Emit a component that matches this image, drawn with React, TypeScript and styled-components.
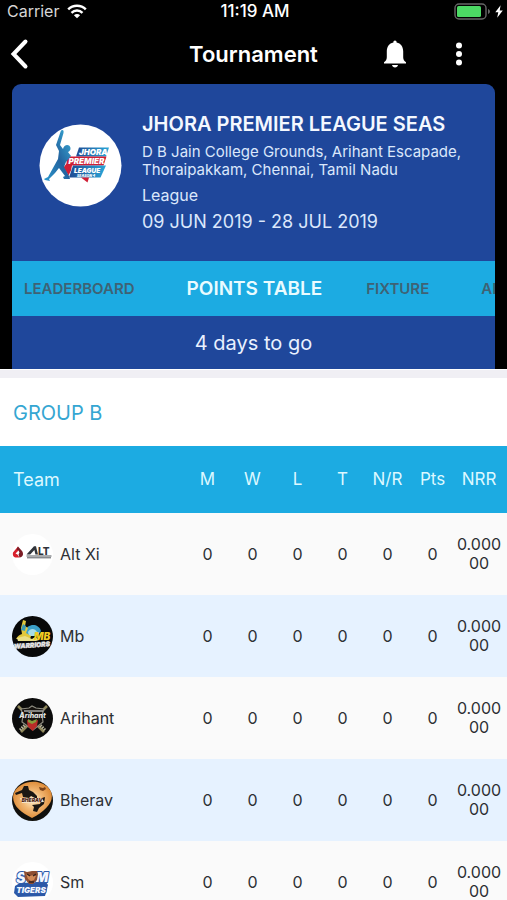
import React from "react";
import styled, { createGlobalStyle } from "styled-components";

const GlobalStyle = createGlobalStyle`
  * { box-sizing: border-box; }
  body { margin: 0; background: #fff; font-family: Inter, "Liberation Sans", sans-serif; }
  button { font: inherit; border: 0; padding: 0; background: none; cursor: pointer; }
  h1, h2, p { margin: 0; font-weight: 400; }
`;

const Screen = styled.main`
  height: 100vh;
  overflow: hidden;
  display: flex;
  flex-direction: column;
`;

const TopArea = styled.header`
  background: #000;
  color: #fff;
  flex: none;
  border-bottom: 1px solid #fff;
`;

const StatusBar = styled.div`
  display: grid;
  grid-template-columns: 1fr auto 1fr;
  align-items: center;
  height: 22px;
  padding: 0 4px 0 7px;
  font-size: 16px;
  line-height: 20px;
`;

const StatusGroup = styled.div<{ $end?: boolean }>`
  display: flex;
  align-items: center;
  gap: ${(p) => (p.$end ? 4 : 8)}px;
  justify-content: ${(p) => (p.$end ? "flex-end" : "flex-start")};
  color: ${(p) => (p.$end ? "#fff" : "#d6d6d6")};
`;

const Clock = styled.span`
  font-size: 17px;
  font-weight: 500;
`;

const NavBar = styled.nav`
  display: grid;
  grid-template-columns: 1fr auto 1fr;
  align-items: center;
  height: 62px;
  padding: 2px 44px 0 8px;
`;

const NavTitle = styled.h1`
  font-size: 22px;
  line-height: 28px;
  font-weight: 600;
  padding-left: 36px;
`;

const NavActions = styled.div`
  display: flex;
  justify-content: flex-end;
  gap: 48px;
`;

const IconButton = styled.button`
  display: flex;
  align-items: center;
  justify-content: center;
  justify-self: start;
  color: #fff;
`;

const Card = styled.section`
  margin: 0 12px;
  border-radius: 9px 9px 0 0;
  background: #1f479b;
  overflow: hidden;
`;

const Summary = styled.div`
  display: flex;
  align-items: flex-start;
  height: 177px;
  padding: 26px 0 0 27px;
  gap: 20px;
`;

const Crest = styled.div`
  flex: none;
  width: 83px;
  height: 83px;
  margin-top: 14px;
`;

const Details = styled.div`
  color: #dbe7fb;
  min-width: 0;
`;

const LeagueName = styled.h2`
  font-size: 20px;
  line-height: 28px;
  font-weight: 600;
  color: #f4f8ff;
  white-space: nowrap;
`;

const Venue = styled.p`
  max-width: 334px;
  margin-top: 5px;
  font-size: 15px;
  line-height: 18px;
`;

const Format = styled.p`
  margin-top: 4px;
  font-size: 16px;
  line-height: 24px;
`;

const Dates = styled.p`
  margin-top: 2px;
  font-size: 18px;
  line-height: 26px;
`;

const Tabs = styled.div`
  display: flex;
  align-items: center;
  height: 55px;
  padding-left: 12px;
  background: #1cabe2;
  overflow: hidden;
`;

const Tab = styled.button<{ $active?: boolean }>`
  flex: none;
  white-space: nowrap;
  line-height: 24px;
  font-weight: 600;
  font-size: ${(p) => (p.$active ? 19 : 15)}px;
  color: ${(p) => (p.$active ? "#e9fbff" : "#3f6274")};
  margin-right: ${(p) => (p.$active ? 44 : 52)}px;
`;

const Countdown = styled.p`
  padding: 13px 0 12px;
  font-size: 20px;
  line-height: 28px;
  text-align: center;
  color: #e9f1ff;
`;

const Scroller = styled.div`
  flex: 1;
  min-height: 0;
  overflow-y: auto;
  scrollbar-width: none;
  background: #fff;
  border-top: 8px solid #f0eff4;
`;

const GroupTitle = styled.h2`
  padding: 21px 13px 19px;
  font-size: 20px;
  line-height: 28px;
  color: #35a6d2;
`;

const PointsTable = styled.table`
  width: 100%;
  table-layout: fixed;
  border-collapse: collapse;
  font-size: 16px;
  line-height: 19px;
  color: #2d3034;
`;

const HeadRow = styled.tr`
  height: 67px;
  background: #1cabe2;
  color: #dcf8ff;
  font-size: 17px;
`;

const TeamRow = styled.tr`
  height: 82px;
  background: #fafafa;
  &:nth-child(even) { background: #e6f2ff; }
`;

const TeamHead = styled.th`
  padding: 0 0 0 13px;
  font-size: 18px;
  font-weight: 400;
  text-align: left;
`;

const StatHead = styled.th<{ $last?: boolean }>`
  width: ${(p) => (p.$last ? 52 : 45)}px;
  padding: 0 ${(p) => (p.$last ? 4 : 0)}px 0 0;
  font-weight: 400;
`;

const TeamCell = styled.th`
  padding: 0 0 0 12px;
  font-weight: 400;
  text-align: left;
`;

const TeamLabel = styled.div`
  display: flex;
  align-items: center;
  gap: 7px;
  svg { flex: none; }
`;

const StatCell = styled.td<{ $last?: boolean }>`
  padding: 0 ${(p) => (p.$last ? 4 : 0)}px 0 0;
  text-align: center;
  word-break: break-all;
`;

const WifiIcon = () => (
  <svg width="20" height="15" viewBox="0 0 20 15" fill="none" stroke="#fff" strokeWidth="2.4" aria-hidden>
    <path d="M1.2 5.4C6 .5 14 .5 18.800 5.400" />
    <path d="M4.500 8.800c3-3 8-3 11 0" />
    <path d="M10 14.300 6.900 11.200c1.700-1.600 4.500-1.600 6.200 0Z" fill="#fff" stroke="none" />
  </svg>
);

const BatteryIcon = () => (
  <svg width="37" height="17" viewBox="0 0 37 17" aria-hidden>
    <rect x="1" y="1" width="31" height="15" rx="4" fill="none" stroke="#666" strokeWidth="1.400" />
    <rect x="3" y="3" width="24" height="11" rx="1.500" fill="#4cd964" />
    <path d="M34 6c2.600.7 2.600 4.300 0 5Z" fill="#666" />
  </svg>
);

const BoltIcon = () => (
  <svg width="8" height="13" viewBox="0 0 8 13" fill="#fff" aria-hidden>
    <path d="M5.600.300.300 7.300h3L2.200 12.700 7.800 5.400H4.700Z" />
  </svg>
);

const BackIcon = () => (
  <svg width="24" height="32" viewBox="0 0 24 32" fill="none" stroke="#fff" strokeWidth="4" strokeLinecap="round" strokeLinejoin="miter" aria-hidden>
    <path d="M17.500 3.500 5.500 16l12 12.500" />
  </svg>
);

const BellIcon = () => (
  <svg width="24" height="28" viewBox="0 0 24 28" fill="#fff" aria-hidden>
    <path d="M12 .6c1 0 1.600.7 1.600 1.800 4.300.9 6.600 4.300 6.600 8.800v6c0 2.300 1 3.800 2.800 5v1.300H1v-1.300c1.800-1.200 2.800-2.700 2.800-5v-6c0-4.500 2.300-7.900 6.600-8.800C10.400 1.300 11 .6 12 .6Z" />
    <path d="M9 25h6c-.3 1.600-1.400 2.500-3 2.500S9.300 26.600 9 25Z" />
  </svg>
);

const MoreIcon = () => (
  <svg width="8" height="24" viewBox="0 0 8 24" fill="#fff" aria-hidden>
    <circle cx="4" cy="3.500" r="3" />
    <circle cx="4" cy="12" r="3" />
    <circle cx="4" cy="20.500" r="3" />
  </svg>
);

const LeagueLogo = () => (
  <svg width="83" height="83" viewBox="0 0 83 83" role="img" aria-label="Jhora Premier League">
    <defs>
      <linearGradient id="panel" x1="0" x2="1">
        <stop offset="0" stopColor="#1e4a92" />
        <stop offset="1" stopColor="#2aa6d8" />
      </linearGradient>
      <linearGradient id="player" x1="0" x2="1" y1="1" y2="0">
        <stop offset="0" stopColor="#2c9bd0" />
        <stop offset=".5" stopColor="#23639f" />
        <stop offset="1" stopColor="#3bb2dc" />
      </linearGradient>
    </defs>
    <circle cx="41.500" cy="41.500" r="41" fill="#fff" />
    <path d="M40 23.500h30l-3 9H37Z" fill="url(#panel)" />
    <path d="M28 32.500h39.500l-3 9H33l-1 5-2.500 5-5-8 3-4Z" fill="#d01f36" />
    <path d="M34 41.500h33l-5.500 12H30Z" fill="url(#panel)" />
    <path d="M42 53.500h8l-1.500 5Z" fill="#d01f36" />
    <path d="M22 6.500c2-1.500 3 0 2.500 2.500L21 21l3 4c1-5 7-5 7.500-1 .2 2-1 3.600-2.500 4l3 4-5 6-2 5 5 9 1 3h-6l-1-2 2-1-6-8-4 5-6 6 1 2-5-1-1-1 4-2 5-9 5-9 1-8-3-6Z" fill="url(#player)" />
    <g fontFamily="Inter, sans-serif" fontWeight="900" fontStyle="italic" fill="#fff">
      <text x="40" y="30.800" fontSize="8">JHORA</text>
      <text x="29.500" y="40" fontSize="8">PREMIER</text>
      <text x="35" y="48.800" fontSize="6.500">LEAGUE</text>
      <text x="38" y="52.800" fontSize="3.500">SEASON 4</text>
    </g>
  </svg>
);

const AltLogo = () => (
  <svg width="41" height="41" viewBox="0 0 41 41" aria-hidden>
    <circle cx="20.500" cy="20.500" r="20.500" fill="#fff" />
    <path d="m6 12.500-5 6c-.7 3 .8 5 3.500 5h3l-2-3-2-1 3-3Z" fill="#d8202c" />
    <path d="m6 12.500 4 4.500c2 3 1 6-2.500 6.500l-1-3 1-2-1-2-2-1Z" fill="#7b1c25" />
    <path d="M14.500 22h25M15 23.800h24" stroke="#55595e" strokeWidth="1" />
    <path d="m14.500 20.500 7.500-8.200h2l2 8.200h-2.600l-1-4.500-4.200 4.500Z" fill="#30343a" />
    <text x="26" y="20.500" fontFamily="Inter, sans-serif" fontSize="10" fontWeight="800" fill="#30343a">LT</text>
  </svg>
);

const WarriorsLogo = () => (
  <svg width="41" height="41" viewBox="0 0 41 41" aria-hidden>
    <circle cx="20.500" cy="20.500" r="20.500" fill="#080909" />
    <path d="M13 15c2-7 13-9 16 0l-3 4H14Z" fill="#3ba0c8" />
    <path d="M16 16c2-4 7-4 9 0l-2 4h-6Z" fill="#a8dce8" />
    <path d="m11 4 3 1-1 5 3 2-2 5 5 3-1 3-14 0c2-3 3-4 6-5l-1-6Z" fill="#e2c83b" />
    <path d="m11 8 3 2-1 5-4-1Z" fill="#3a9ab5" />
    <path d="m5 22 8-2 7 3 3-2 4 3-3 1-18 0Z" fill="#e9df87" />
    <g fontFamily="Inter, sans-serif" fontWeight="900" fontStyle="italic" textAnchor="middle">
      <text x="30" y="23.500" fontSize="10" fill="#f2cd22">MB</text>
      <text x="20" y="31.500" fontSize="6.500" fill="#e6e6e6" stroke="#e6e6e6" strokeWidth=".4" transform="rotate(-4 20 31)">WARRIORS</text>
    </g>
  </svg>
);

const ArihantLogo = () => (
  <svg width="41" height="41" viewBox="0 0 41 41" aria-hidden>
    <circle cx="20.500" cy="20.500" r="20.500" fill="#0b0b0b" />
    <path d="m6 8 26 26M35 8 9 34" stroke="#8d8558" strokeWidth="2.600" />
    <path d="m8 32 5-5M33 32l-5-5" stroke="#b7b49a" strokeWidth="3" strokeDasharray="1.500 1" />
    <path d="m9 11 8-1 3-2 4 2 8 1-2 6 1 7-10 8-11-8 1-7Z" fill="#15120f" stroke="#8e8c81" strokeWidth="1.200" />
    <path d="m15 22 5 2 6-2-1 6-4.500 5-5-5Z" fill="#b92c28" />
    <path d="m16 21 4 2 5-2-1 3-4 2-4-2Z" fill="#879b3b" />
    <path d="M12 13h19" stroke="#cfd0cb" strokeWidth="1.200" />
    <text x="20.500" y="20" fontFamily="Inter, sans-serif" fontSize="7" fontWeight="800" fontStyle="italic" textAnchor="middle" fill="#e1e3e1">Arihant</text>
  </svg>
);

const BheravLogo = () => (
  <svg width="41" height="41" viewBox="0 0 41 41" aria-hidden>
    <defs>
      <radialGradient id="sun" cx=".5" cy=".5">
        <stop offset="0" stopColor="#fff0cf" />
        <stop offset=".5" stopColor="#f2b976" />
        <stop offset="1" stopColor="#e08f3c" />
      </radialGradient>
    </defs>
    <circle cx="20.500" cy="20.500" r="20.500" fill="#11100d" />
    <path d="M1.500 14C6 0 30-3 38 10c6 10-3 20-18 28C9 33-1 25 1.500 14Z" fill="url(#sun)" />
    <path d="m3 13 7-3 2-4 4 0 1 4 4 2 4 4 0 3-6-3-2 2-6-1-1-4-6 2Z" fill="#1b1713" />
    <path d="m20 25 8-1 2-6 3-1-1 7-5 4-2 4-4-1 1-4Z" fill="#1b1713" />
    <path d="m27 7 4 1 2-1 1 2-3 2-3-1Z" fill="#7a4118" />
    <path d="m8 18 22 0 2 4-22 1Z" fill="#f6e7cf" />
    <text x="20" y="22.300" fontFamily="Inter, sans-serif" fontSize="5" fontWeight="900" fontStyle="italic" textAnchor="middle" fill="#4d2519">BHERAV</text>
  </svg>
);

const TigersLogo = () => (
  <svg width="41" height="41" viewBox="0 0 41 41" aria-hidden>
    <circle cx="20.500" cy="20.500" r="20.500" fill="#fff" />
    <path d="m3 24 5-3 26-1 2 3-3 11-27 1-4-4Z" fill="#2b58a7" />
    <g fontFamily="Inter, sans-serif" fontWeight="900" fontStyle="italic" textAnchor="middle" fill="#f4f7ff" stroke="#2f5cab" strokeWidth="2" strokeLinejoin="round" paintOrder="stroke">
      <text x="9" y="21" fontSize="14">S</text>
      <text x="30" y="20" fontSize="13">M</text>
      <text x="19" y="30.500" fontSize="8">TIGERS</text>
    </g>
    <path d="m12 9 3 1 5-1 5 0 1 3-1 6-4 4-4 0-4-5Z" fill="#8e4e32" />
    <path d="m14 12 4 2 3-1 3 1-2 4-3 1-3-2Z" fill="#d28a58" />
    <path d="m15 12 3 2M24 12l-3 2M17 20h5" stroke="#34221d" strokeWidth="1.300" />
  </svg>
);

const stats = ["M", "W", "L", "T", "N/R", "Pts", "NRR"];
const values = ["0", "0", "0", "0", "0", "0", "0.00000"];

const teams = [
  { name: "Alt Xi", Logo: AltLogo },
  { name: "Mb", Logo: WarriorsLogo },
  { name: "Arihant", Logo: ArihantLogo },
  { name: "Bherav", Logo: BheravLogo },
  { name: "Sm", Logo: TigersLogo },
];

const tabs = ["LEADERBOARD", "POINTS TABLE", "FIXTURE", "ABOUT"];

export default function App() {
  const [active, setActive] = React.useState("POINTS TABLE");
  return (
    <Screen>
      <GlobalStyle />
      <TopArea>
        <StatusBar>
          <StatusGroup>
            <span>Carrier</span>
            <WifiIcon />
          </StatusGroup>
          <Clock>11:19 AM</Clock>
          <StatusGroup $end>
            <BatteryIcon />
            <BoltIcon />
          </StatusGroup>
        </StatusBar>
        <NavBar>
          <IconButton aria-label="Back"><BackIcon /></IconButton>
          <NavTitle>Tournament</NavTitle>
          <NavActions>
            <IconButton aria-label="Notifications"><BellIcon /></IconButton>
            <IconButton aria-label="More options"><MoreIcon /></IconButton>
          </NavActions>
        </NavBar>
        <Card>
          <Summary>
            <Crest><LeagueLogo /></Crest>
            <Details>
              <LeagueName>JHORA PREMIER LEAGUE SEAS</LeagueName>
              <Venue>D B Jain College Grounds, Arihant Escapade, Thoraipakkam, Chennai, Tamil Nadu</Venue>
              <Format>League</Format>
              <Dates>09 JUN 2019 - 28 JUL 2019</Dates>
            </Details>
          </Summary>
          <Tabs role="tablist">
            {tabs.map((tab) => (
              <Tab key={tab} role="tab" aria-selected={tab === active} $active={tab === active} onClick={() => setActive(tab)}>
                {tab}
              </Tab>
            ))}
          </Tabs>
          <Countdown>4 days to go</Countdown>
        </Card>
      </TopArea>
      <Scroller>
        <GroupTitle>GROUP B</GroupTitle>
        <PointsTable>
          <thead>
            <HeadRow>
              <TeamHead scope="col">Team</TeamHead>
              {stats.map((s) => (
                <StatHead key={s} scope="col" $last={s === "NRR"}>{s}</StatHead>
              ))}
            </HeadRow>
          </thead>
          <tbody>
            {teams.map(({ name, Logo }) => (
              <TeamRow key={name}>
                <TeamCell scope="row">
                  <TeamLabel><Logo />{name}</TeamLabel>
                </TeamCell>
                {values.map((v, i) => (
                  <StatCell key={stats[i]} $last={i === 6}>{v}</StatCell>
                ))}
              </TeamRow>
            ))}
          </tbody>
        </PointsTable>
      </Scroller>
    </Screen>
  );
}
